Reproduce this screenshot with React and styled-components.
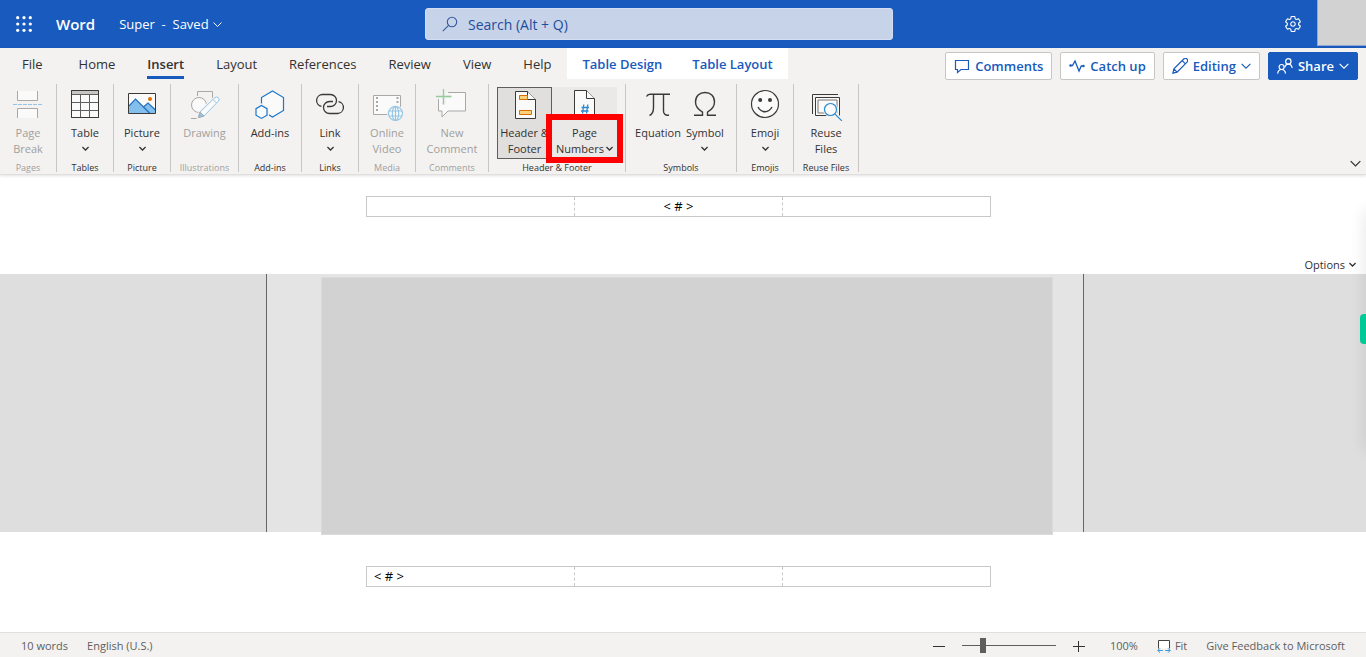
import React, { useState } from 'react';
import styled, { createGlobalStyle, css } from 'styled-components';
import { IoSettingsOutline } from 'react-icons/io5';

const App = () => {
  const [activeTab, setActiveTab] = useState('Insert');
  const [zoom, setZoom] = useState(20);

  return (
    <Page>
      <GlobalStyle />
      <TitleBar>
        <TitleLeft>
          <BarButton aria-label="App launcher"><WaffleIcon /></BarButton>
          <Brand>Word</Brand>
          <DocName>Super&nbsp; -&nbsp; Saved <Chevron size={9} /></DocName>
        </TitleLeft>
        <SearchBox>
          <SearchIcon />
          <SearchInput type="text" aria-label="Search" placeholder="Search (Alt + Q)" />
        </SearchBox>
        <TitleRight>
          <BarButton aria-label="Settings"><IoSettingsOutline size={18} /></BarButton>
          <Account aria-label="Account" />
        </TitleRight>
      </TitleBar>

      <Ribbon>
        <TabRow>
          <Tabs>
            {tabs.map((tab) => (
              <Tab key={tab} onClick={() => setActiveTab(tab)}>
                <TabText $active={tab === activeTab}>{tab}</TabText>
              </Tab>
            ))}
            <ContextTabs>
              <ContextTab>Table Design</ContextTab>
              <ContextTab>Table Layout</ContextTab>
            </ContextTabs>
          </Tabs>
          <Actions>
            <Action><CommentIcon />Comments</Action>
            <Action><PulseIcon />Catch up</Action>
            <Action><PencilIcon />Editing<Chevron size={10} /></Action>
            <Action $primary><PeopleIcon />Share<Chevron size={10} /></Action>
          </Actions>
        </TabRow>
        <Tools>
          {groups.map((group) => (
            <Group key={group.label} $width={group.width} $disabled={group.disabled}>
              <GroupTools>
                {group.tools.map((tool) => (
                  <Tool key={tool.lines[0]} disabled={group.disabled} $look={tool.look}>
                    <ToolIcon viewBox="0 0 32 32">{tool.icon}</ToolIcon>
                    <ToolLine>{tool.lines[0]}</ToolLine>
                    <ToolLine>
                      {tool.lines[1]}
                      {tool.menu && <Chevron size={7} bold />}
                    </ToolLine>
                    {tool.marked && <Marker />}
                  </Tool>
                ))}
              </GroupTools>
              <GroupLabel>{group.label}</GroupLabel>
            </Group>
          ))}
          <Collapse aria-label="Collapse ribbon"><Chevron size={11} /></Collapse>
        </Tools>
      </Ribbon>

      <Document>
        <HeaderZone>
          <Sheet>
            <ZoneTable>
              <tbody>
                <tr><Cell /><Cell $center>&lt; # &gt;</Cell><Cell /></tr>
              </tbody>
            </ZoneTable>
          </Sheet>
          <Options>Options <Chevron size={7} bold /></Options>
        </HeaderZone>
        <BodyZone>
          <BodySheet><Content /></BodySheet>
        </BodyZone>
        <FooterZone>
          <Sheet>
            <ZoneTable>
              <tbody>
                <tr><Cell>&lt; # &gt;</Cell><Cell /><Cell /></tr>
              </tbody>
            </ZoneTable>
          </Sheet>
        </FooterZone>
        <SideShadow />
        <SideHandle aria-label="Open side panel" />
      </Document>

      <StatusBar>
        <StatusGroup>
          <span>10 words</span>
          <span>English (U.S.)</span>
        </StatusGroup>
        <StatusGroup>
          <ZoomControls>
            <StatusButton aria-label="Zoom out" onClick={() => setZoom(Math.max(0, zoom - 5))}>
              <StepIcon />
            </StatusButton>
            <Slider
              type="range"
              aria-label="Zoom"
              value={zoom}
              onChange={(e) => setZoom(Number(e.target.value))}
            />
            <StatusButton aria-label="Zoom in" onClick={() => setZoom(Math.min(100, zoom + 5))}>
              <StepIcon plus />
            </StatusButton>
          </ZoomControls>
          <span>100%</span>
          <StatusButton><FitIcon />Fit</StatusButton>
          <StatusButton>Give Feedback to Microsoft</StatusButton>
        </StatusGroup>
      </StatusBar>
    </Page>
  );
};

const Chevron = ({ size, bold }) => (
  <svg width={size} height={size} viewBox="0 0 10 10" fill="none" stroke="currentColor" strokeWidth={bold ? 1.7 : 1.1}>
    <path d="M.6 2.8 5 7.2 9.4 2.8" />
  </svg>
);

const WaffleIcon = () => (
  <svg width="16" height="16" viewBox="0 0 16 16" fill="currentColor">
    {[1.7, 8, 14.3].map((y) => [1.7, 8, 14.3].map((x) => (
      <circle key={`${x}-${y}`} cx={x} cy={y} r="1.6" />
    )))}
  </svg>
);

const SearchIcon = () => (
  <svg width="16" height="16" viewBox="0 0 16 16" fill="none" stroke="#35599d" strokeWidth="1.1">
    <circle cx="10" cy="6" r="4.7" />
    <path d="M6.6 9.4.8 15.2" />
  </svg>
);

const CommentIcon = () => (
  <svg width="16" height="16" viewBox="0 0 16 16" fill="none" stroke="currentColor" strokeWidth="1.2">
    <path d="M1.5 2.5h13v9H7l-3.5 3v-3h-2z" />
  </svg>
);

const PulseIcon = () => (
  <svg width="16" height="16" viewBox="0 0 16 16" fill="none" stroke="currentColor" strokeWidth="1.3">
    <path d="M1.5 7.5h2L6 3l4 10 2.3-5h2.2" />
    <circle cx="1.5" cy="7.5" r="1.2" fill="currentColor" stroke="none" />
    <circle cx="14.5" cy="8" r="1.2" fill="currentColor" stroke="none" />
  </svg>
);

const PencilIcon = () => (
  <svg width="16" height="16" viewBox="0 0 16 16" fill="none" stroke="currentColor" strokeWidth="1.2">
    <path d="m.9 15.1 1-4.2L11.8 1a2.2 2.2 0 0 1 3.2 3.2L5.1 14.1zM10.2 2.6l3.2 3.2M1.9 10.9l3.2 3.2" />
  </svg>
);

const PeopleIcon = () => (
  <svg width="16" height="16" viewBox="0 0 16 16" fill="none" stroke="currentColor" strokeWidth="1.2">
    <circle cx="11.3" cy="3.4" r="2.7" />
    <path d="M7.9 9.5c.3-2.2 1.6-3.4 3.4-3.4s3.4 1.3 3.9 3.9" />
    <circle cx="4.6" cy="9" r="2.5" />
    <path d="M.7 15.6c.2-2.6 1.6-4.1 3.9-4.1s3.7 1.5 3.9 4.1" />
  </svg>
);

const StepIcon = ({ plus }) => (
  <svg width="12" height="12" viewBox="0 0 12 12" stroke="#323130">
    <path d={plus ? 'M0 6.5h12M5.5 1v11' : 'M0 6.5h12'} />
  </svg>
);

const FitIcon = () => (
  <svg width="14" height="14" viewBox="0 0 14 14" fill="none">
    <path d="M1.5 9.5v-8h11v8" fill="#fff" stroke="#444" />
    <path d="M.8 11.5h5M8.2 11.5h5M3 9.3.8 11.5 3 13.7M11 9.3l2.2 2.2-2.2 2.2" stroke="#3b97d3" />
  </svg>
);

const ink = '#3b3a39';
const grey = '#a9a8a7';
const paleBlue = '#94c5e4';
const paper = '#fafafa';

const pageBreakIcon = (
  <g fill={paper} stroke={grey}>
    <path d="M5.5 3v9.5h20V3M5.5 30v-9.5h20V30" />
    <path d="M1 16.5h30" stroke={paleBlue} strokeDasharray="4 1" />
  </g>
);

const tableIcon = (
  <g fill={paper} stroke={ink}>
    <path d="M2.5 2.5h27v27h-27z" />
    <path d="M3 3h26v3.5H3z" fill="#c8c6c4" stroke="none" />
    <path d="M3 6.5h26M3 14.5h26M3 22.5h26M11.5 7v22M20.5 7v22" stroke="#605e5c" />
    <path d="M2.5 2.5h27v27h-27z" fill="none" />
  </g>
);

const pictureIcon = (
  <g>
    <path d="M2.5 5.5h27v20h-27z" fill={paper} />
    <path d="M3 18.5 9.5 11 24 25.5H3z" fill="#83beec" />
    <path d="m17.5 19.5 4.5-4 7.5 6.5v3.5H23z" fill="#83beec" />
    <path d="M3 18 9.5 11 24 25.5M17.5 19l4.5-4 7.5 7" fill="none" stroke="#1e6fbf" strokeWidth="1.2" />
    <circle cx="24" cy="11" r="2" fill="#e07000" />
    <path d="M2.5 5.5h27v20h-27z" fill="none" stroke={ink} />
  </g>
);

const drawingIcon = (
  <g fill="none" stroke={grey}>
    <path d="M8.5 8V3.5h15V10" />
    <circle cx="10" cy="17" r="7.5" fill={paper} />
    <path d="M2 30.5h6" />
    <path d="m9.5 29.500 1.500-5.500L26 9.500a2.500 2.500 0 0 1 3.500 3.500L15 28z" fill={paper} stroke="#f3f2f1" strokeWidth="3" />
    <path d="m9.500 29.500 1.500-5.500L26 9.500a2.500 2.500 0 0 1 3.500 3.500L15 28zM24 11.500l3.500 3.500M11 24l4 4" fill={paper} stroke={paleBlue} />
    <path d="m9.500 29.500 1.500-5.500 4 4z" fill={paleBlue} />
  </g>
);

const addinsIcon = (
  <g fill={paper} stroke="#1b76c9" strokeWidth="1.2">
    <path d="m18.500 3 11 6.500v13l-11 6.500-11-6.500v-13z" />
    <path d="m7.500 17.500 5.500 3.200v6.500l-5.500 3.200L2 27.200v-6.500z" stroke="#f3f2f1" strokeWidth="4" />
    <path d="m7.500 17.500 5.500 3.200v6.500l-5.500 3.200L2 27.200v-6.500z" />
  </g>
);

const linkIcon = (
  <g fill="none" stroke={ink} strokeWidth="1.3">
    <path d="M7.500 18.400a6 6 0 0 1 1-11.900h8a6 6 0 0 1 0 12h-3.500" />
    <path d="M24.500 13.600a6 6 0 0 1-1 11.900h-8a6 6 0 0 1 0-12h3.500" />
  </g>
);

const videoIcon = (
  <g fill="none" stroke={grey}>
    <path d="M2.500 7.500h27v19h-27z" fill={paper} />
    <path d="M6 9v16M26.500 9v8" strokeWidth="2" strokeDasharray="2 2" />
    <circle cx="24.500" cy="25.500" r="7" fill={paper} stroke="#f3f2f1" strokeWidth="3" />
    <g stroke={paleBlue} strokeWidth="1.2">
      <circle cx="24.500" cy="25.500" r="7" fill={paper} />
      <ellipse cx="24.500" cy="25.500" rx="3.200" ry="7" />
      <path d="M18 23h13M18 28h13M24.500 18.500v14" />
    </g>
  </g>
);

const newCommentIcon = (
  <g fill="none" stroke={grey}>
    <path d="M12 4.500h17.500v18.500H12l-6 6v-6H2.500V11" fill={paper} />
    <path d="M0 8.500h15.500M7.500 1v15.500" stroke="#f3f2f1" strokeWidth="4" />
    <path d="M0 8.500h15.500M7.500 1v15.500" stroke="#92cc9d" strokeWidth="1.3" />
  </g>
);

const headerFooterIcon = (
  <g fill={paper} stroke={ink}>
    <path d="M6.500 3.500h12l8 8v19h-20z" />
    <path d="M18.500 3.500v8h8" />
    <path d="M10.500 7.500h8v4h-8zM10.500 22.500h12v4h-12z" fill="#fbd27c" stroke="#d96f00" />
  </g>
);

const pageNumberIcon = (
  <g fill={paper} stroke={ink}>
    <path d="M5.500 2.500h12l8 8v20h-20z" />
    <path d="M17.500 2.500v8h8" />
    <path d="m14.800 16.500-1.300 9M18.800 16.500l-1.300 9M12.500 19.500h7.500M12 23h7.500" fill="none" stroke="#2b8ad0" strokeWidth="1.3" />
  </g>
);

const equationIcon = (
  <g fill="none" stroke={ink} strokeWidth="1.4">
    <path d="M4.500 8.500C5.500 6.500 6.500 6.200 8 6.200h20M11.500 6.500v13c0 4-1.500 7-4 8M21.500 6.500V23c0 3 2 4.800 5.500 4" />
  </g>
);

const symbolIcon = (
  <path
    d="M5 27.300h8.500v-3.200C9 21.500 6.500 18.500 6.500 14c0-6 4-9.500 9.500-9.500s9.500 3.500 9.500 9.500c0 4.500-2.500 7.500-7 10.100v3.200H27"
    fill="none"
    stroke={ink}
    strokeWidth="1.4"
  />
);

const emojiIcon = (
  <g fill={paper} stroke={ink}>
    <circle cx="16" cy="16" r="13.500" strokeWidth="1.2" />
    <circle cx="11.200" cy="12" r="2" fill={ink} stroke="none" />
    <circle cx="21" cy="12" r="2" fill={ink} stroke="none" />
    <path d="M9 19c3.500 6.300 10.500 6.300 14 0" fill="none" strokeWidth="1.5" />
  </g>
);

const reuseIcon = (
  <g fill="none" stroke={ink}>
    <path d="M2.500 26V6.500H28" />
    <path d="M5.500 9.500h24v18h-24z" fill={paper} />
    <path d="M8 12h19v13H8z" stroke="#797775" />
    <circle cx="20.500" cy="21.500" r="6" fill={paper} stroke="#f3f2f1" strokeWidth="3" />
    <path d="m25 26 7 7" stroke="#f3f2f1" strokeWidth="4" />
    <circle cx="20.500" cy="21.500" r="6" fill={paper} stroke="#2b8ad0" strokeWidth="1.2" />
    <path d="m24.800 25.800 7 7" stroke="#2b8ad0" strokeWidth="1.2" />
  </g>
);

const tabs = ['File', 'Home', 'Insert', 'Layout', 'References', 'Review', 'View', 'Help'];

const groups = [
  { label: 'Pages', width: 57, disabled: true, tools: [{ lines: ['Page', 'Break'], icon: pageBreakIcon }] },
  { label: 'Tables', width: 57, tools: [{ lines: ['Table'], menu: true, icon: tableIcon }] },
  { label: 'Picture', width: 57, tools: [{ lines: ['Picture'], menu: true, icon: pictureIcon }] },
  { label: 'Illustrations', width: 68, disabled: true, tools: [{ lines: ['Drawing'], icon: drawingIcon }] },
  { label: 'Add-ins', width: 63, tools: [{ lines: ['Add-ins'], icon: addinsIcon }] },
  { label: 'Links', width: 57, tools: [{ lines: ['Link'], menu: true, icon: linkIcon }] },
  { label: 'Media', width: 57, disabled: true, tools: [{ lines: ['Online', 'Video'], icon: videoIcon }] },
  { label: 'Comments', width: 73, disabled: true, tools: [{ lines: ['New', 'Comment'], icon: newCommentIcon }] },
  {
    label: 'Header & Footer',
    width: 137,
    tools: [
      { lines: ['Header &', 'Footer'], look: 'pressed', icon: headerFooterIcon },
      { lines: ['Page', 'Numbers'], look: 'hover', menu: true, marked: true, icon: pageNumberIcon },
    ],
  },
  {
    label: 'Symbols',
    width: 111,
    tools: [
      { lines: ['Equation'], icon: equationIcon },
      { lines: ['Symbol'], menu: true, icon: symbolIcon },
    ],
  },
  { label: 'Emojis', width: 57, tools: [{ lines: ['Emoji'], menu: true, icon: emojiIcon }] },
  { label: 'Reuse Files', width: 65, tools: [{ lines: ['Reuse', 'Files'], icon: reuseIcon }] },
];

const GlobalStyle = createGlobalStyle`
  * {
    box-sizing: border-box;
  }

  body {
    margin: 0;
    background: #fff;
    font-family: 'Open Sans', 'Noto Sans', sans-serif;
    color: #323130;
  }

  button,
  input {
    font: inherit;
    color: inherit;
  }

  button {
    padding: 0;
    border: none;
    background: none;
    white-space: nowrap;
  }

  svg {
    flex: none;
  }
`;

const Page = styled.div`
  display: flex;
  flex-direction: column;
  min-height: 100vh;
  overflow: hidden;
`;

const TitleBar = styled.header`
  display: flex;
  height: 48px;
  background: #185abd;
  color: #fff;
`;

const TitleLeft = styled.div`
  display: flex;
  align-items: center;
  flex: 0 0 425px;
`;

const BarButton = styled.button`
  display: flex;
  align-items: center;
  justify-content: center;
  width: 48px;
  height: 48px;
`;

const Brand = styled.span`
  padding: 0 8px;
  font-size: 15px;
  font-weight: 600;
`;

const DocName = styled.button`
  display: flex;
  align-items: center;
  gap: 4px;
  padding: 0 16px;
  font-size: 13px;
`;

const SearchBox = styled.label`
  display: flex;
  align-items: center;
  gap: 10px;
  flex: 0 1 468px;
  height: 32px;
  margin: 8px 0;
  padding: 0 16px;
  border: 1px solid #d3def0;
  border-radius: 3px;
  background: #c7d3e8;
`;

const SearchInput = styled.input`
  flex: 1;
  min-width: 0;
  padding: 0;
  border: none;
  outline: none;
  background: none;
  font-size: 14px;

  &::placeholder {
    color: #1d4e9e;
    opacity: 1;
  }
`;

const TitleRight = styled.div`
  display: flex;
  margin-left: auto;
`;

const Account = styled.button`
  width: 49px;
  height: 46px;
  border-left: 1px solid #8fa9d4;
  border-bottom: 1px solid #8fa9d4;
  background: #d2d2d2;
`;

const Ribbon = styled.div`
  position: relative;
  border-bottom: 1px solid #e1dfdd;
  background: #f3f2f1;
  box-shadow: 0 1px 3px rgba(0, 0, 0, 0.12);
`;

const TabRow = styled.div`
  display: flex;
  justify-content: space-between;
  height: 36px;
  padding-right: 8px;
`;

const Tabs = styled.nav`
  display: flex;
  height: 31px;
`;

const Tab = styled.button`
  padding: 0 16px;
  font-size: 13px;

  &:first-child {
    padding-left: 22px;
    padding-right: 20px;
  }
`;

const TabText = styled.span`
  display: block;
  height: 31px;
  border-bottom: 3px solid transparent;
  line-height: 32px;

  ${({ $active }) => $active && css`
    border-color: #185abd;
    font-weight: 600;
  `}
`;

const ContextTabs = styled.div`
  display: flex;
  background: #fff;
`;

const ContextTab = styled.button`
  padding: 0 15px;
  color: #185abd;
  font-size: 13px;
  font-weight: 600;
`;

const Actions = styled.div`
  display: flex;
  gap: 8px;
  padding-top: 4px;
`;

const Action = styled.button`
  display: flex;
  align-items: center;
  gap: 5px;
  height: 28px;
  padding: 0 8px;
  border: 1px solid ${({ $primary }) => ($primary ? '#185abd' : '#c8c6c4')};
  border-radius: 2px;
  background: ${({ $primary }) => ($primary ? '#185abd' : '#fff')};
  color: ${({ $primary }) => ($primary ? '#fff' : '#185abd')};
  font-size: 13px;
  font-weight: 600;
`;

const Tools = styled.div`
  display: flex;
  height: 90px;
`;

const Group = styled.section`
  display: flex;
  flex-direction: column;
  align-items: center;
  width: ${({ $width }) => $width}px;
  height: 88px;
  padding-top: 3px;
  border-right: 1px solid #c8c6c4;
  color: ${({ $disabled }) => ($disabled ? '#a19f9d' : '#323130')};
`;

const GroupTools = styled.div`
  display: flex;
`;

const Tool = styled.button`
  position: relative;
  display: flex;
  flex-direction: column;
  align-items: center;
  min-width: 46px;
  height: 72px;
  border: 1px solid transparent;
  font-size: 11px;

  ${({ $look }) => $look === 'pressed' && css`
    width: 55px;
    border-color: #605e5c;
    background: #e1dfdd;
  `}

  ${({ $look }) => $look === 'hover' && css`
    width: 65px;
    background: #ebe9e8;
  `}
`;

const ToolIcon = styled.svg`
  width: 32px;
  height: 32px;
  margin-bottom: 4px;
  overflow: visible;
`;

const ToolLine = styled.span`
  display: flex;
  align-items: center;
  justify-content: center;
  gap: 2px;
  height: 16px;
`;

const Marker = styled.span`
  position: absolute;
  top: 26px;
  left: -7px;
  width: 77px;
  height: 49px;
  border: 6px solid #fe0000;
`;

const GroupLabel = styled.span`
  font-size: 9px;
  line-height: 18px;
  white-space: nowrap;
`;

const Collapse = styled.button`
  align-self: flex-end;
  margin-left: auto;
  padding: 0 5px;
`;

const Document = styled.main`
  position: relative;
  display: flex;
  flex: 1;
  flex-direction: column;
`;

const HeaderZone = styled.div`
  display: flex;
  flex-direction: column;
  justify-content: space-between;
  height: 99px;
  padding-top: 21px;
`;

const FooterZone = styled.div`
  height: 100px;
  padding-top: 34px;
`;

const BodyZone = styled.div`
  display: flex;
  flex: 1;
  justify-content: center;
  min-height: 258px;
  padding-right: 16px;
  background: #dedede;
`;

const Sheet = styled.div`
  width: 100%;
  max-width: 834px;
  margin: 0 auto;
  padding: 0 109px 0 100px;
`;

const ZoneTable = styled.table`
  width: 100%;
  border: 1px solid #c8c8c8;
  border-collapse: collapse;
  table-layout: fixed;
`;

const Cell = styled.td`
  height: 20px;
  padding: 0 7px;
  border-right: 1px dashed #c8c8c8;
  color: #000;
  font-size: 13px;
  line-height: 19px;
  text-align: ${({ $center }) => ($center ? 'center' : 'left')};

  &:last-child {
    border-right: 1px solid #c8c8c8;
  }
`;

const Options = styled.button`
  display: flex;
  align-items: center;
  align-self: flex-end;
  gap: 4px;
  height: 20px;
  padding-right: 10px;
  font-size: 11px;
`;

const BodySheet = styled.div`
  display: flex;
  width: 100%;
  max-width: 818px;
  padding: 3px 30px 0 54px;
  border: solid #666;
  border-width: 0 1px;
  background: #e4e4e4;
`;

const Content = styled.div`
  z-index: 1;
  flex: 1;
  margin-bottom: -3px;
  border: 1px solid #dadada;
  background: #d2d2d2;
`;

const SideShadow = styled.div`
  position: absolute;
  top: 35px;
  right: -10px;
  width: 10px;
  height: 240px;
  box-shadow: 0 0 16px rgba(0, 0, 0, 0.12);
`;

const SideHandle = styled.button`
  position: absolute;
  top: 139px;
  right: 0;
  width: 6px;
  height: 30px;
  border-radius: 4px 0 0 4px;
  background: #00c998;
`;

const StatusBar = styled.footer`
  display: flex;
  align-items: center;
  justify-content: space-between;
  height: 25px;
  padding: 1px 21px 0;
  border-top: 1px solid #e1dfdd;
  background: #f3f2f1;
  color: #605e5c;
  font-size: 11px;
`;

const StatusGroup = styled.div`
  display: flex;
  align-items: center;
  gap: 19px;
`;

const ZoomControls = styled.div`
  display: flex;
  align-items: center;
  gap: 17px;
  padding-right: 6px;
`;

const StatusButton = styled.button`
  display: flex;
  align-items: center;
  gap: 4px;
`;

const Slider = styled.input`
  width: 94px;
  height: 16px;
  margin: 0;
  appearance: none;
  background: linear-gradient(#605e5c, #605e5c) center / 100% 1px no-repeat;

  &::-webkit-slider-thumb {
    appearance: none;
    width: 6px;
    height: 15px;
    background: #605e5c;
  }
`;

export default App;
